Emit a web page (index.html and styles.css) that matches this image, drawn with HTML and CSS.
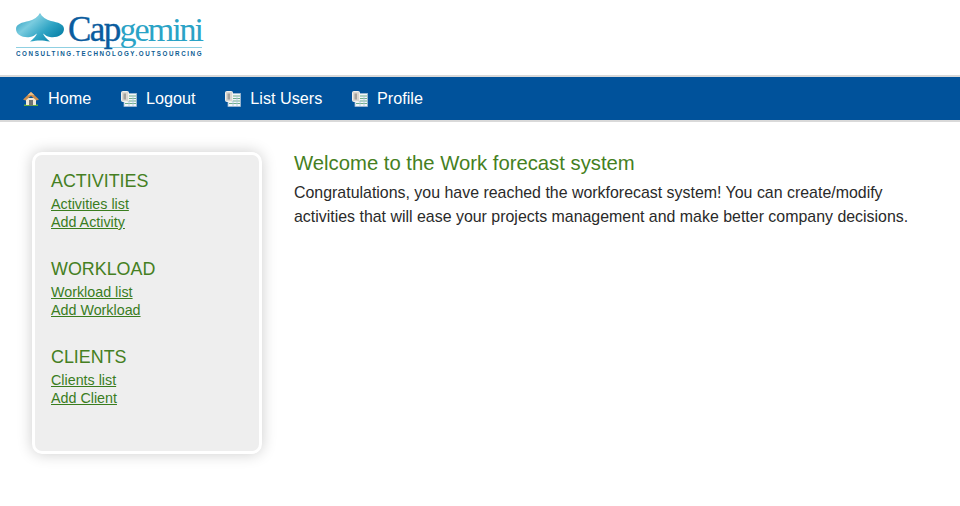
FILE: index.html
```html
<!DOCTYPE html>
<html lang="en">
<head>
<meta charset="utf-8">
<title>Work forecast system</title>
<link rel="stylesheet" href="styles.css">
</head>
<body>
<header class="header">
  <div class="logo">
    <div class="logo-main">
      <svg class="logo-spade" width="48" height="29" viewBox="0 0 48 29">
        <defs>
          <linearGradient id="sp" x1="0" y1="0" x2="1" y2="0.7">
            <stop offset="0" stop-color="#1390b6"/>
            <stop offset="0.38" stop-color="#7accdf"/>
            <stop offset="0.7" stop-color="#2fa4c4"/>
            <stop offset="1" stop-color="#0a83a9"/>
          </linearGradient>
        </defs>
        <path d="M24 0 C26 4 30 6.500 35 8 C42 9.500 48 11 48 16 C48 22 41 25 34 24 C31 23.500 29 22 27 20.500 C28 23 30.500 26 34 28.500 C30 28 27 27.500 24 27.500 C21 27.500 18 28 14 28.500 C17.500 26 20 23 21 20.500 C19 22 17 23.500 14 24 C7 25 0 22 0 16 C0 11 6 9.500 13 8 C18 6.500 22 4 24 0 Z" fill="url(#sp)"/>
      </svg>
      <span class="logo-word"><span class="logo-cap">Cap</span><span class="logo-gem">gemini</span></span>
    </div>
    <div class="logo-tag">CONSULTING.TECHNOLOGY.OUTSOURCING</div>
  </div>
</header>
<nav class="nav">
  <a class="nav-item" href="#">
    <svg class="nav-icon" width="16" height="16" viewBox="0 0 16 16">
      <path d="M1 15 H15 V13.500 H1 Z" fill="#63ad3f"/>
      <rect x="3" y="7" width="10" height="7" fill="#f0e8d8"/>
      <rect x="6" y="9" width="4" height="5.500" fill="#707273"/>
      <path d="M8 1 L16 8.500 L13.500 9.500 L8 5 L2.500 9.500 L0 8.500 Z" fill="#c98d4e"/>
      <path d="M8 1 L11.500 4.300 L8 4 L4.500 4.300 Z" fill="#e8bd88"/>
    </svg>
    Home
  </a>
  <a class="nav-item" href="#">
    <svg class="nav-icon" width="16" height="16" viewBox="0 0 16 16"><use href="#doc"/></svg>
    Logout
  </a>
  <a class="nav-item" href="#">
    <svg class="nav-icon" width="16" height="16" viewBox="0 0 16 16">
      <g id="doc">
        <rect x="3" y="2.500" width="12.500" height="13" fill="#f2f6fa" stroke="#9fb8d2" stroke-width=".8"/>
        <path d="M8 5h7M8 7.500h7M4 10h11M4 12.500h11" stroke="#6fae8a" stroke-width="1.100"/>
        <path d="M8 9v6M12 5v10" stroke="#a9c4de" stroke-width=".8"/>
        <rect x="0.500" y="0.500" width="7" height="10" rx="1" fill="#d9d7d2" stroke="#f1f0ec"/>
        <rect x="2.500" y="2.500" width="2.500" height="6" fill="#a3a29e"/>
      </g>
    </svg>
    List Users
  </a>
  <a class="nav-item" href="#">
    <svg class="nav-icon" width="16" height="16" viewBox="0 0 16 16"><use href="#doc"/></svg>
    Profile
  </a>
</nav>
<div class="page">
  <aside class="sidebar">
    <section class="group">
      <h3 class="group-title">ACTIVITIES</h3>
      <a class="side-link" href="#">Activities list</a>
      <a class="side-link" href="#">Add Activity</a>
    </section>
    <section class="group">
      <h3 class="group-title">WORKLOAD</h3>
      <a class="side-link" href="#">Workload list</a>
      <a class="side-link" href="#">Add Workload</a>
    </section>
    <section class="group">
      <h3 class="group-title">CLIENTS</h3>
      <a class="side-link" href="#">Clients list</a>
      <a class="side-link" href="#">Add Client</a>
    </section>
  </aside>
  <main class="content">
    <h1 class="title">Welcome to the Work forecast system</h1>
    <p class="intro">Congratulations, you have reached the workforecast system! You can create/modify activities that will ease your projects management and make better company decisions.</p>
  </main>
</div>
</body>
</html>
```
FILE: styles.css
```css
* { box-sizing: border-box; }
html, body { margin: 0; padding: 0; }
body {
  background: #fff;
  color: #222;
  font-family: "Liberation Sans", Arial, sans-serif;
  height: 506px;
  overflow: hidden;
}
.header { height: 75px; padding: 13px 0 0 16px; }
.logo { width: 186px; }
.logo-main { display: flex; align-items: flex-start; height: 35px; border-bottom: 1px solid #8fd0e2; }
.logo-spade { flex: none; width: 48px; height: 29px; }
.logo-word {
  font-family: "Liberation Serif", serif;
  font-size: 35px;
  line-height: 33px;
  margin-left: 4px;
  white-space: nowrap;
}
.logo-cap { color: #0a5c9e; letter-spacing: -1.6px; -webkit-text-stroke: .4px #0a5c9e; }
.logo-gem { color: #2aa3c6; font-size: 34px; letter-spacing: -2px; }
.logo-tag {
  margin-top: 1px;
  font-size: 8px;
  font-weight: bold;
  line-height: 9px;
  color: #0d5c92;
  letter-spacing: 2.050px;
  white-space: nowrap;
  transform: scaleX(.78);
  transform-origin: left top;
}
.nav {
  height: 47px;
  background: #00529b;
  border-top: 2px solid #d9d9d9;
  border-bottom: 2px solid #d9d9d9;
  display: flex;
  align-items: center;
  padding-left: 23px;
  gap: 29.800px;
}
.nav-item {
  display: flex;
  align-items: center;
  gap: 9px;
  color: #fff;
  text-decoration: none;
  font-size: 16.200px;
}
.nav-icon { flex: none; }
.page { display: flex; padding: 30px 0 0 32px; }
.sidebar {
  width: 230px;
  height: 302px;
  background: #eee;
  border: 3px solid #fff;
  border-radius: 10px;
  box-shadow: 0 0 15px rgba(0,0,0,.2);
  padding: 16px 16px 0;
  flex: none;
}
.group { margin-bottom: 28px; }
.group-title {
  margin: 0 0 4px;
  font-size: 17.900px;
  line-height: 20px;
  font-weight: normal;
  color: #457f22;
}
.side-link {
  display: block;
  font-size: 14.300px;
  line-height: 18px;
  color: #3a7d1e;
}
.content { margin-left: 32px; width: 624px; }
.title {
  margin: -1px 0 0;
  font-size: 20.300px;
  line-height: 24px;
  font-weight: normal;
  color: #457f22;
}
.intro { margin: 6px 0 0; font-size: 15.930px; line-height: 24px; color: #2a2a2a; }
```
